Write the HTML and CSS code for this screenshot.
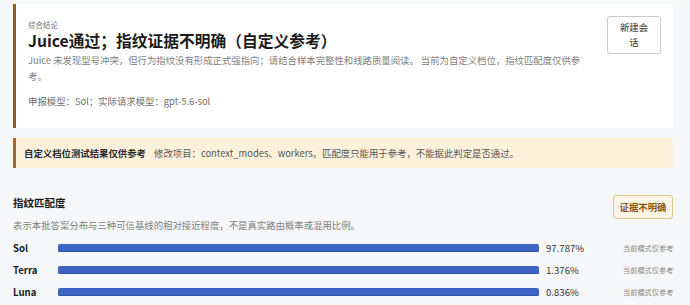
FILE: index.html
```html
<!DOCTYPE html>
<html lang="zh-CN">
<head>
    <meta charset="UTF-8">
    <meta name="viewport" content="width=device-width, initial-scale=1.0">
    <title>综合结论</title>
    <link rel="stylesheet" href="styles.css">
</head>
<body>

<div class="page">
    <div class="summary">
        <div class="summary-main">
            <div class="eyebrow">综合结论</div>
            <h1 class="title">Juice通过；指纹证据不明确（自定义参考）</h1>
            <p class="desc">Juice 未发现型号冲突，但行为指纹没有形成正式强指向；请结合样本完整性和线路质量阅读。 当前为自定义档位，指纹匹配度仅供参考。</p>
            <p class="meta">申报模型：Sol；实际请求模型：gpt-5.6-sol</p>
        </div>
        <button class="new-btn">新建会话</button>
    </div>

    <div class="notice">
        <strong>自定义档位测试结果仅供参考</strong>
        <span>修改项目：context_modes、workers。匹配度只能用于参考，不能据此判定是否通过。</span>
    </div>

    <div class="section">
        <div class="section-head">
            <div>
                <h2 class="section-title">指纹匹配度</h2>
                <p class="section-desc">表示本批答案分布与三种可信基线的相对接近程度，不是真实路由概率或混用比例。</p>
            </div>
            <span class="badge">证据不明确</span>
        </div>

        <div class="rows">
            <div class="row">
                <span class="name">Sol</span>
                <div class="bar"></div>
                <span class="pct">97.787%</span>
                <span class="note">当前模式仅参考</span>
            </div>
            <div class="row">
                <span class="name">Terra</span>
                <div class="bar"></div>
                <span class="pct">1.376%</span>
                <span class="note">当前模式仅参考</span>
            </div>
            <div class="row">
                <span class="name">Luna</span>
                <div class="bar"></div>
                <span class="pct">0.836%</span>
                <span class="note">当前模式仅参考</span>
            </div>
        </div>
    </div>
</div>

</body>
</html>
```

FILE: styles.css
```css
body {
    margin: 0;
    background: #f6f7f8;
    font-family: "Noto Sans CJK SC", "Noto Sans", sans-serif;
    color: #222;
}

.page {
    padding: 4px 17px 0 13px;
}

.summary {
    display: flex;
    gap: 16px;
    height: 124px;
    box-sizing: border-box;
    background: #fff;
    border-left: 3px solid #9b5a12;
    padding: 12px 12px 0 12px;
}

.summary-main {
    flex: 1;
}

.eyebrow {
    margin-top: 3px;
    font-size: 7.5px;
    line-height: 11px;
    color: #777;
}

.title {
    margin: 0;
    font-size: 15.75px;
    line-height: 22px;
    font-weight: 700;
    color: #1b1b1b;
}

.desc {
    margin: 0;
    font-size: 9.4px;
    line-height: 16px;
    color: #808080;
}

.meta {
    margin: 9px 0 0;
    font-size: 9.4px;
    line-height: 16px;
    color: #707070;
}

.new-btn {
    align-self: flex-start;
    width: 54px;
    height: 38px;
    padding: 0 10px;
    background: #fff;
    border: 1px solid #cacaca;
    border-radius: 3px;
    font-family: inherit;
    font-size: 9.4px;
    line-height: 15px;
    color: #333;
}

.notice {
    margin-top: 10px;
    background: #fdf1dc;
    border-left: 3px solid #a8681a;
    padding: 7px 8px;
    font-size: 9.4px;
    line-height: 16px;
    color: #555;
}

.notice strong {
    color: #2a2a2a;
    margin-right: 6px;
}

.section {
    margin-top: 27px;
}

.section-head {
    display: flex;
    justify-content: space-between;
    align-items: flex-start;
}

.section-title {
    margin: 0;
    font-size: 10.5px;
    line-height: 16px;
    font-weight: 700;
    color: #1b1b1b;
}

.section-desc {
    margin: 6px 0 0;
    font-size: 9.4px;
    line-height: 16px;
    color: #808080;
}

.badge {
    box-sizing: border-box;
    height: 24px;
    width: 60px;
    text-align: center;
    line-height: 22px;
    background: #fdf6e8;
    border: 1px solid #e2c48e;
    border-radius: 3px;
    font-size: 9.4px;
    font-weight: 700;
    color: #8a5610;
}

.rows {
    margin-top: 4px;
}

.row {
    display: grid;
    grid-template-columns: 45px 1fr 84px 50px;
    align-items: center;
    height: 22px;
}

.name {
    font-size: 9.6px;
    font-weight: 700;
    color: #1b1b1b;
}

.bar {
    height: 8px;
    background: #3d63c4;
    border-radius: 2px;
    box-shadow: inset 0 -1px 0 #2f52ab;
}

.pct {
    padding-left: 7px;
    font-size: 9.6px;
    color: #333;
}

.note {
    font-size: 7.2px;
    color: #888;
    text-align: right;
    white-space: nowrap;
}
```
